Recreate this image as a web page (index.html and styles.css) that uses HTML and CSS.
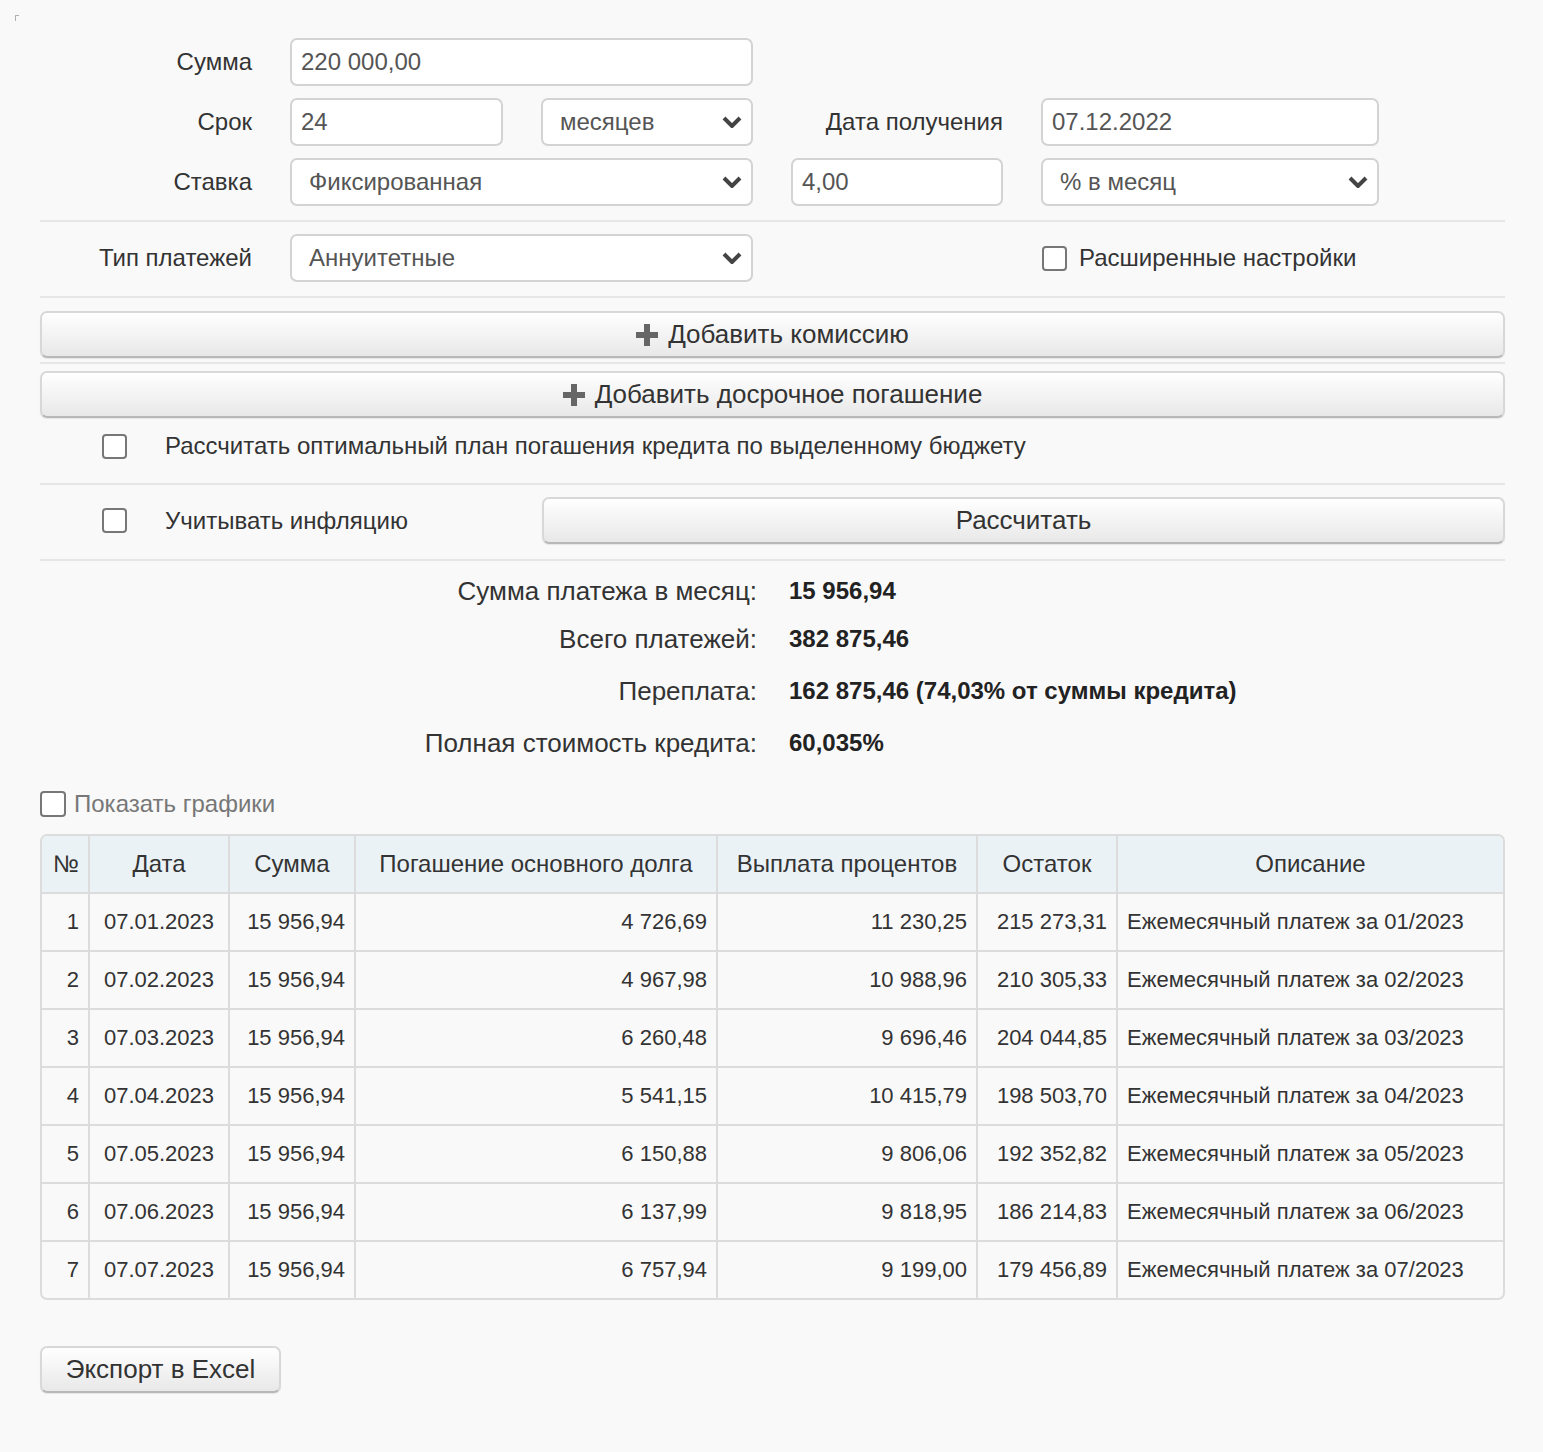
FILE: index.html
```html
<!DOCTYPE html>
<html lang="ru">
<head>
<meta charset="utf-8">
<title>Кредитный калькулятор</title>
<link rel="stylesheet" href="styles.css">
</head>
<body>
<div class="corner"></div>
<div class="page">

  <div class="form-grid">
    <label class="lbl lbl-first">Сумма</label>
    <input class="field span2" type="text" value="220 000,00">

    <label class="lbl lbl-first">Срок</label>
    <input class="field" type="text" value="24">
    <div class="select"><span>месяцев</span><svg class="chev" viewBox="0 0 20 12"><polyline points="2,2 10,10 18,2"/></svg></div>
    <label class="lbl lbl-fourth">Дата получения</label>
    <input class="field" type="text" value="07.12.2022">

    <label class="lbl lbl-first">Ставка</label>
    <div class="select span2"><span>Фиксированная</span><svg class="chev" viewBox="0 0 20 12"><polyline points="2,2 10,10 18,2"/></svg></div>
    <input class="field" type="text" value="4,00">
    <div class="select"><span>% в месяц</span><svg class="chev" viewBox="0 0 20 12"><polyline points="2,2 10,10 18,2"/></svg></div>
  </div>

  <div class="sep sep-a"></div>

  <div class="form-grid form-grid-2">
    <label class="lbl lbl-first">Тип платежей</label>
    <div class="select span2"><span>Аннуитетные</span><svg class="chev" viewBox="0 0 20 12"><polyline points="2,2 10,10 18,2"/></svg></div>
    <div class="adv"><span class="cb"></span><span>Расширенные настройки</span></div>
  </div>

  <div class="sep sep-b"></div>

  <button class="btn btn-wide btn-first"><svg class="plus" viewBox="0 0 22 22"><path d="M8 0h6v8h8v6h-8v8h-6v-8h-8v-6h8z"/></svg>Добавить комиссию</button>
  <div class="sep sep-mid"></div>
  <button class="btn btn-wide btn-second"><svg class="plus" viewBox="0 0 22 22"><path d="M8 0h6v8h8v6h-8v8h-6v-8h-8v-6h8z"/></svg>Добавить досрочное погашение</button>

  <div class="check-row check-row-1"><span class="cb"></span><span class="check-text">Рассчитать оптимальный план погашения кредита по выделенному бюджету</span></div>

  <div class="sep sep-c"></div>

  <div class="calc-row">
    <div class="check-row check-inline"><span class="cb"></span><span class="check-text">Учитывать инфляцию</span></div>
    <button class="btn btn-calc">Рассчитать</button>
  </div>

  <div class="sep sep-d"></div>

  <div class="results">
    <div class="res-row res-first"><span class="res-lbl">Сумма платежа в месяц:</span><span class="res-val">15 956,94</span></div>
    <div class="res-row res-second"><span class="res-lbl">Всего платежей:</span><span class="res-val">382 875,46</span></div>
    <div class="res-row"><span class="res-lbl">Переплата:</span><span class="res-val">162 875,46 (74,03% от суммы кредита)</span></div>
    <div class="res-row"><span class="res-lbl">Полная стоимость кредита:</span><span class="res-val">60,035%</span></div>
  </div>

  <div class="charts"><span class="cb cb-small"></span><span>Показать графики</span></div>

  <table class="schedule">
    <colgroup>
      <col class="c-n"><col class="c-date"><col class="c-sum"><col class="c-main"><col class="c-pct"><col class="c-rest"><col class="c-desc">
    </colgroup>
    <thead>
      <tr><th>№</th><th>Дата</th><th>Сумма</th><th>Погашение основного долга</th><th>Выплата процентов</th><th>Остаток</th><th class="last">Описание</th></tr>
    </thead>
    <tbody>
      <tr><td class="r">1</td><td class="c">07.01.2023</td><td class="r">15 956,94</td><td class="r">4 726,69</td><td class="r">11 230,25</td><td class="r">215 273,31</td><td class="last">Ежемесячный платеж за 01/2023</td></tr>
      <tr><td class="r">2</td><td class="c">07.02.2023</td><td class="r">15 956,94</td><td class="r">4 967,98</td><td class="r">10 988,96</td><td class="r">210 305,33</td><td class="last">Ежемесячный платеж за 02/2023</td></tr>
      <tr><td class="r">3</td><td class="c">07.03.2023</td><td class="r">15 956,94</td><td class="r">6 260,48</td><td class="r">9 696,46</td><td class="r">204 044,85</td><td class="last">Ежемесячный платеж за 03/2023</td></tr>
      <tr><td class="r">4</td><td class="c">07.04.2023</td><td class="r">15 956,94</td><td class="r">5 541,15</td><td class="r">10 415,79</td><td class="r">198 503,70</td><td class="last">Ежемесячный платеж за 04/2023</td></tr>
      <tr><td class="r">5</td><td class="c">07.05.2023</td><td class="r">15 956,94</td><td class="r">6 150,88</td><td class="r">9 806,06</td><td class="r">192 352,82</td><td class="last">Ежемесячный платеж за 05/2023</td></tr>
      <tr><td class="r">6</td><td class="c">07.06.2023</td><td class="r">15 956,94</td><td class="r">6 137,99</td><td class="r">9 818,95</td><td class="r">186 214,83</td><td class="last">Ежемесячный платеж за 06/2023</td></tr>
      <tr class="last-row"><td class="r">7</td><td class="c">07.07.2023</td><td class="r">15 956,94</td><td class="r">6 757,94</td><td class="r">9 199,00</td><td class="r">179 456,89</td><td class="last">Ежемесячный платеж за 07/2023</td></tr>
    </tbody>
  </table>

  <button class="btn btn-export">Экспорт в Excel</button>
</div>
</body>
</html>
```
FILE: styles.css
```css
* { box-sizing: border-box; }

html, body {
  margin: 0;
  padding: 0;
  background: #f9f9f9;
  font-family: "Liberation Sans", Arial, sans-serif;
  color: #333;
}

.corner {
  width: 4px;
  height: 6px;
  margin: 15px 0 0 15px;
  border-top: 1px solid #b0b0b0;
  border-left: 1px solid #b0b0b0;
}

.page {
  padding: 17px 38px 58px 40px;
}

.form-grid {
  display: grid;
  grid-template-columns: 212px 213px 212px 212px 338px;
  grid-auto-rows: 48px;
  column-gap: 38px;
  row-gap: 12px;
}

.span2 { grid-column: span 2; }
.lbl-first { grid-column: 1; }
.lbl-fourth { grid-column: 4; }

.lbl {
  display: flex;
  align-items: center;
  justify-content: flex-end;
  font-size: 24px;
  color: #333;
  white-space: nowrap;
}

.field {
  height: 48px;
  border: 2px solid #d3d3d3;
  border-radius: 7px;
  background: #fff;
  font-family: "Liberation Sans", Arial, sans-serif;
  font-size: 24px;
  color: #555;
  padding: 0 9px;
  margin: 0;
  outline: none;
  width: 100%;
}

.select {
  height: 48px;
  border: 2px solid #d3d3d3;
  border-radius: 7px;
  background: #fff;
  font-size: 24px;
  color: #555;
  padding: 0 9px 0 17px;
  display: flex;
  align-items: center;
  justify-content: space-between;
}

.chev {
  width: 20px;
  height: 12px;
  fill: none;
  stroke: #444;
  stroke-width: 4;
  stroke-linecap: butt;
}

.sep {
  height: 2px;
  background: #e6e6e6;
}
.sep-a { margin-top: 14px; }
.form-grid-2 { margin-top: 12px; }
.sep-b { margin-top: 14px; }
.sep-mid { margin-top: 4px; }
.sep-c { margin-top: 24px; }
.sep-d { margin-top: 15px; }

.adv {
  grid-column: 5;
  display: flex;
  align-items: center;
  gap: 12px;
  font-size: 24px;
  color: #333;
  padding-left: 1px;
  white-space: nowrap;
}

.cb {
  display: inline-block;
  width: 25px;
  height: 25px;
  border: 2px solid #777;
  border-radius: 4px;
  background: #fff;
  flex: none;
}

.btn {
  display: flex;
  align-items: center;
  justify-content: center;
  font-family: "Liberation Sans", Arial, sans-serif;
  font-size: 26px;
  color: #333;
  background: linear-gradient(#ffffff, #e8e8e8);
  border: 2px solid #d8d8d8;
  border-bottom-color: #b8b8b8;
  border-radius: 7px;
  box-shadow: 0 1px 1px rgba(0,0,0,0.08);
  padding: 0;
  margin: 0;
  cursor: pointer;
}

.btn-wide {
  width: 100%;
  height: 47px;
}
.btn-first { margin-top: 13px; }
.btn-second { margin-top: 7px; }

.plus {
  width: 22px;
  height: 22px;
  fill: #666;
  margin-right: 10px;
}

.check-row {
  display: flex;
  align-items: center;
  padding-left: 62px;
  height: 26px;
  font-size: 24px;
  color: #333;
}
.check-row-1 { margin-top: 15px; }
.check-text { margin-left: 38px; }

.calc-row {
  display: flex;
  align-items: center;
  margin-top: 12px;
}
.check-inline {
  width: 502px;
  flex: none;
}
.btn-calc {
  flex: 1;
  height: 47px;
}

.results {
  display: flex;
  flex-direction: column;
  margin-top: 16px;
}
.res-row {
  display: flex;
  align-items: center;
  height: 28px;
  line-height: 28px;
  margin-top: 24px;
}
.res-first { margin-top: 0; }
.res-second { margin-top: 20px; }
.res-lbl {
  width: 717px;
  text-align: right;
  font-size: 26px;
  color: #333;
}
.res-val {
  margin-left: 32px;
  font-size: 24px;
  font-weight: bold;
  color: #222;
}

.charts {
  display: flex;
  align-items: center;
  gap: 8px;
  margin-top: 33px;
  font-size: 24px;
  color: #777;
}
.cb-small { width: 26px; height: 26px; }

.schedule {
  margin-top: 16px;
  width: 100%;
  table-layout: fixed;
  border-collapse: separate;
  border-spacing: 0;
  border: 2px solid #dcdcdc;
  border-radius: 7px;
  overflow: hidden;
  font-size: 22px;
  color: #333;
}
.c-n { width: 48px; }
.c-date { width: 140px; }
.c-sum { width: 126px; }
.c-main { width: 362px; }
.c-pct { width: 260px; }
.c-rest { width: 140px; }
.c-desc { width: auto; }

.schedule th,
.schedule td {
  line-height: 56px;
  padding: 0 9px;
  border-right: 2px solid #dcdcdc;
  border-bottom: 2px solid #dcdcdc;
  white-space: nowrap;
  overflow: hidden;
}
.schedule th {
  background: #ebf2f6;
  font-weight: normal;
  font-size: 24px;
  text-align: center;
}
.schedule th:first-child { text-align: left; padding-left: 11px; }
.schedule .last { border-right: none; }
.schedule .last-row td { border-bottom: none; }
.schedule td.r { text-align: right; }
.schedule td.c { text-align: center; }
.schedule td.last { padding-left: 9px; }

.btn-export {
  margin-top: 46px;
  width: 241px;
  height: 47px;
}
```
